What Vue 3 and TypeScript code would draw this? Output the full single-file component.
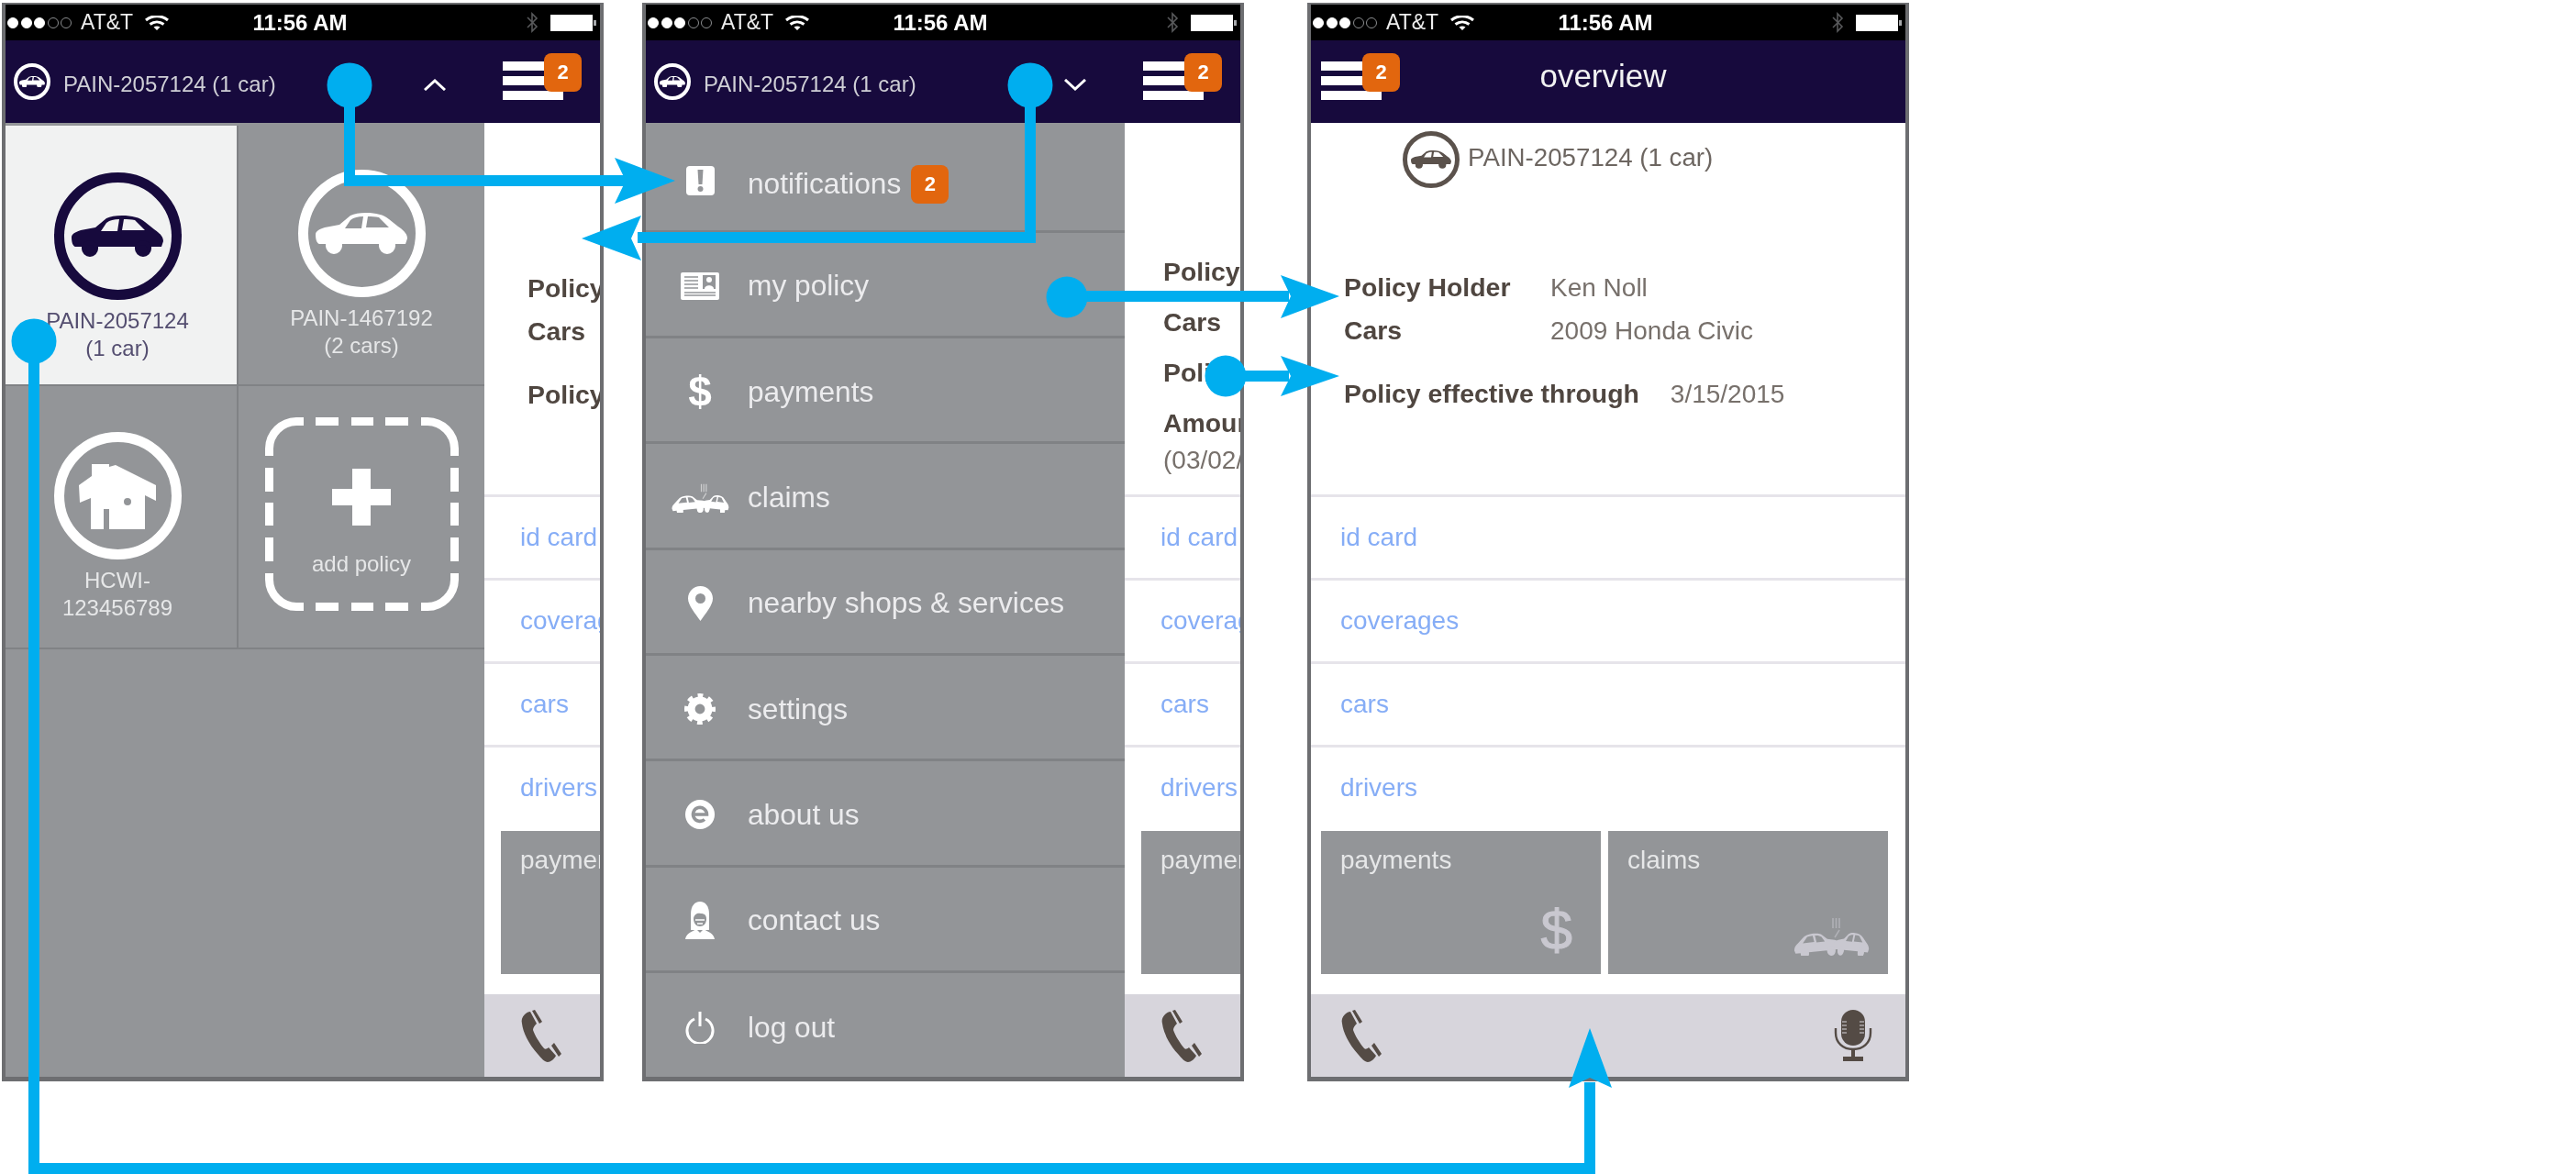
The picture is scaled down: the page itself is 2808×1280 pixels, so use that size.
<script setup lang="ts">
interface InfoRow {
  label: string
  value: string
  spaced?: boolean
}

interface Phone {
  id: string
  mode: 'accounts' | 'menu' | 'overview'
  rows: InfoRow[]
}

const policyRows: InfoRow[] = [
  { label: 'Policy Holder', value: 'Ken Noll' },
  { label: 'Cars', value: '2009 Honda Civic' },
  { label: 'Policy effective through', value: '3/15/2015', spaced: true },
]

const phones: Phone[] = [
  { id: 'p1', mode: 'accounts', rows: policyRows },
  {
    id: 'p2',
    mode: 'menu',
    rows: [
      { label: 'Policy Holder', value: 'Ken Noll' },
      { label: 'Cars', value: '2009 Honda Civic' },
      { label: 'Policy effective through', value: '3/15/2015' },
      { label: 'Amount due', value: '' },
    ],
  },
  { id: 'p3', mode: 'overview', rows: policyRows },
]

const menu = ['notifications', 'my policy', 'payments', 'claims', 'nearby shops & services', 'settings', 'about us', 'contact us', 'log out']
const links = ['id card', 'coverages', 'cars', 'drivers']

// connector overlay, in page coordinates
const lines = [
  '381,93 381,197 690,197',
  '1123,93 1123,259 695,259',
  '1163,323 1405,323',
  '1336,410 1405,410',
  '37,372 37,1274 1733,1274 1733,1180',
]
const heads = [
  '736,197 670,172 682,197 670,222',
  '634,260 699,235 688,260 699,284',
  '1460,323 1396,300 1407,323 1396,347',
  '1460,410 1396,388 1407,410 1396,432',
  '1733,1121 1710,1186 1733,1175 1757,1186',
]
const dots = [
  { x: 381, y: 93, r: 24.5 },
  { x: 1123, y: 93, r: 24.5 },
  { x: 1163, y: 324, r: 22.5 },
  { x: 1336, y: 410, r: 22.5 },
  { x: 37, y: 372, r: 24.5 },
]
</script>

<template>
  <div class="stage">
    <svg class="defs" width="0" height="0">
      <defs>
        <g id="car">
          <path fill-rule="evenodd" d="M0 24C0 20 4 18 10 16L26 13L38 3C42 1 48 0 55 0C66 0 74 2 80 7L90 15C96 19 100 23 100 28L98 34H87A9 9 0 0 1 69 34H29A9 9 0 0 1 11 34H4C1 33 0 28 0 24ZM32 17H50L52 4C46 4 42 5 38 8ZM55 16H80L69 5C65 4 61 4 57 4Z" />
          <path fill-rule="evenodd" d="M20 27A9 9 0 1 0 20 45A9 9 0 1 0 20 27ZM20 32A4.5 4.5 0 1 1 20 41A4.5 4.5 0 1 1 20 32ZM78 27A9 9 0 1 0 78 45A9 9 0 1 0 78 27ZM78 32A4.5 4.5 0 1 1 78 41A4.5 4.5 0 1 1 78 32Z" />
        </g>
        <g id="crash">
          <use href="#car" transform="translate(50 15) rotate(-6) scale(-.5 .58)" />
          <use href="#car" transform="translate(47 15) rotate(6) scale(.38 .58)" />
          <path d="M44 1V12M47.5 1V12M51 1V12M51 14L46 22" fill="none" stroke="currentColor" stroke-width="1.6" opacity=".55" />
        </g>
        <g id="handset">
          <path d="M4 5C1 8 0 11 1 15C2 24 8 37 18 48C22 53 26 57 29 57C32 57 36 54 38 50L30 41C28 43 26 43 25 42C20 36 15 28 13 22C13 19 15 17 17 15L10 2C8 2 6 3 4 5Z" />
          <path d="M12 1L15 0L23 13L20 15ZM33 39L36 36L44 48L41 51Z" />
        </g>
      </defs>
    </svg>

    <section v-for="phone in phones" :key="phone.id" class="phone" :class="phone.id">
      <div class="status">
        <div class="status-left">
          <span class="signal">
            <i v-for="n in 3" :key="n" class="on"></i>
            <i v-for="n in 2" :key="n"></i>
          </span>
          <span class="carrier">AT&amp;T</span>
          <svg class="wifi" viewBox="0 0 26 16" fill="none" stroke="#fff" stroke-width="3">
            <path d="M1 5C8 -.8 18 -.8 25 5M5.5 9.5C10 6 16 6 20.5 9.5" />
            <path d="M9.5 12.5L13 16L16.5 12.5C14.5 11 11.5 11 9.5 12.5Z" fill="#fff" stroke="none" />
          </svg>
        </div>
        <span class="time">11:56 AM</span>
        <div class="status-right">
          <svg class="bt" viewBox="0 0 14 23" fill="none" stroke="#58595b" stroke-width="1.6">
            <path d="M2 6L12 16L7 21V2L12 7L2 17" />
          </svg>
          <span class="battery"></span>
        </div>
      </div>

      <header class="nav" :class="{ 'nav--title': phone.mode === 'overview' }">
        <template v-if="phone.mode !== 'overview'">
          <span class="nav-circle">
            <svg viewBox="0 0 100 46" fill="#fff"><use href="#car" /></svg>
          </span>
          <span class="nav-policy">PAIN-2057124 (1 car)</span>
          <svg class="chevron" :class="{ 'chevron--down': phone.mode === 'menu' }" viewBox="0 0 24 13" fill="none" stroke="#fff" stroke-width="3">
            <path d="M1 12L12 2L23 12" />
          </svg>
        </template>
        <div class="burger">
          <i></i><i></i><i></i>
          <b class="badge badge--burger">2</b>
        </div>
        <h1 v-if="phone.mode === 'overview'" class="nav-title">overview</h1>
      </header>

      <div class="main">
        <aside v-if="phone.mode === 'accounts'" class="drawer accounts">
          <div class="cell cell--active">
            <span class="ring">
              <svg class="ring-car" viewBox="0 0 100 46" fill="currentColor"><use href="#car" /></svg>
            </span>
            <p>PAIN-2057124<br />(1 car)</p>
          </div>
          <div class="cell">
            <span class="ring">
              <svg class="ring-car" viewBox="0 0 100 46" fill="currentColor"><use href="#car" /></svg>
            </span>
            <p>PAIN-1467192<br />(2 cars)</p>
          </div>
          <div class="cell cell--home">
            <span class="ring">
              <svg class="ring-home" viewBox="0 0 84 72" fill="currentColor">
                <path fill-rule="evenodd" d="M14 1H33V4L40 2L84 24V41L72 35V72H33V50H27V72H13V38L1 43L0 24L14 14ZM53 38A4 4 0 1 0 53 46A4 4 0 1 0 53 38Z" />
              </svg>
            </span>
            <p>HCWI-<br />123456789</p>
          </div>
          <div class="cell cell--add">
            <div class="add-box">
              <svg class="add-frame" viewBox="0 0 211 211" fill="none" stroke="#fff" stroke-width="9">
                <path d="M4.5 42V34A30 30 0 0 1 34 4.5H42M55 4.5H80M94 4.5H118M131 4.5H156M170 4.5H177A30 30 0 0 1 206.5 34V42M206.5 55V81M206.5 93V118M206.5 131V157M206.5 170V177A30 30 0 0 1 177 206.5H170M156 206.5H131M118 206.5H94M80 206.5H55M42 206.5H34A30 30 0 0 1 4.5 177V170M4.5 157V131M4.5 118V93M4.5 81V55" />
              </svg>
              <svg class="plus" viewBox="0 0 64 62" fill="#fff"><path d="M22 0H42V22H64V40H42V62H22V40H0V22H22Z" /></svg>
              <span>add policy</span>
            </div>
          </div>
        </aside>

        <nav v-if="phone.mode === 'menu'" class="drawer menu">
          <div v-for="item in menu" :key="item" class="menu-row">
            <span class="menu-icon">
              <svg v-if="item === 'notifications'" class="i-note" viewBox="0 0 31 32">
                <rect width="31" height="32" rx="4" fill="#fff" />
                <path d="M12.5 4H18.5L17.5 20H13.5Z" fill="#939598" />
                <circle cx="15.5" cy="25" r="3" fill="#939598" />
              </svg>
              <svg v-else-if="item === 'my policy'" class="i-card" viewBox="0 0 42 30">
                <rect width="42" height="30" rx="2" fill="#fff" />
                <path d="M4 5H19M4 9H19M4 13H19M4 17H19M4 22H38M4 25H38" stroke="#939598" stroke-width="1.3" />
                <rect x="24" y="3" width="14" height="15" fill="#939598" />
                <circle cx="31" cy="8" r="3" fill="#fff" />
                <path d="M26 18C26 13 36 13 36 18Z" fill="#fff" />
              </svg>
              <span v-else-if="item === 'payments'" class="i-dollar">$</span>
              <svg v-else-if="item === 'claims'" class="i-crash" viewBox="0 0 84 42" fill="#fff" color="#fff"><use href="#crash" /></svg>
              <svg v-else-if="item === 'nearby shops & services'" class="i-pin" viewBox="0 0 27 38">
                <path fill="#fff" fill-rule="evenodd" d="M13.5 0C21 0 27 6 27 13.5C27 21 19 30 13.5 38C8 30 0 21 0 13.5C0 6 6 0 13.5 0ZM13.5 8A5.5 5.5 0 1 0 13.5 19A5.5 5.5 0 1 0 13.5 8Z" />
              </svg>
              <svg v-else-if="item === 'settings'" class="i-gear" viewBox="0 0 36 36" fill="none" stroke="#fff">
                <circle cx="18" cy="18" r="10" stroke-width="8.5" />
                <circle cx="18" cy="18" r="15" stroke-width="6" stroke-dasharray="5.89 5.89" stroke-dashoffset="2.95" />
              </svg>
              <svg v-else-if="item === 'about us'" class="i-about" viewBox="0 0 32 32">
                <circle cx="16" cy="16" r="16" fill="#fff" />
                <path d="M8.5 16H23.5A7.5 7.5 0 1 0 21 21.5" fill="none" stroke="#939598" stroke-width="3.6" />
              </svg>
              <svg v-else-if="item === 'contact us'" class="i-contact" viewBox="0 0 32 41">
                <path d="M6 31V14C6 5 10 0 16 0C22 0 26 5 26 14V31Z" fill="#fff" />
                <path d="M9 18C10 13 14 12 17 13C21 13 23 15 23 19C23 24 20 27 16 27C12 27 9 24 9 18Z" fill="#939598" />
                <path d="M11 20H21M13 24H19" stroke="#fff" stroke-width="1.5" />
                <path d="M0 41C1 34 8 33 12 30L16 34L20 30C24 33 31 34 32 41Z" fill="#fff" />
              </svg>
              <svg v-else class="i-power" viewBox="0 0 32 35" fill="none" stroke="#fff" stroke-width="3">
                <path d="M10 8A14 14 0 1 0 22 8M16 0V16" />
              </svg>
            </span>
            <span>{{ item }}</span>
            <b v-if="item === 'notifications'" class="badge badge--menu">2</b>
          </div>
        </nav>

        <div class="content" :class="{ 'content--pushed': phone.mode !== 'overview' }">
          <div class="summary">
            <div v-if="phone.mode === 'overview'" class="policy-id">
              <span class="policy-ring">
                <svg viewBox="0 0 100 46" fill="currentColor"><use href="#car" /></svg>
              </span>
              <span class="policy-name">PAIN-2057124 (1 car)</span>
            </div>
            <div v-for="row in phone.rows" :key="row.label" class="info" :class="{ 'info--spaced': row.spaced }">
              <strong>{{ row.label }}</strong>
              <span>{{ row.value }}</span>
            </div>
            <div v-if="phone.mode === 'menu'" class="info-note">(03/02/2015)</div>
          </div>
          <a v-for="link in links" :key="link" class="link">{{ link }}</a>
          <div class="tiles">
            <div class="tile">
              <span>payments</span>
              <span class="tile-dollar">$</span>
            </div>
            <div class="tile">
              <span>claims</span>
              <svg class="tile-crash" viewBox="0 0 84 42" fill="currentColor"><use href="#crash" /></svg>
            </div>
          </div>
          <div class="toolbar">
            <svg class="handset" viewBox="0 0 44 57" fill="currentColor"><use href="#handset" /></svg>
            <svg class="mic" viewBox="0 0 42 57" fill="currentColor">
              <rect x="8" width="26" height="39" rx="13" />
              <path d="M9 13H14M9 17H14M9 21H14M9 25H14M28 13H33M28 17H33M28 21H33M28 25H33" stroke="#d7d5dc" stroke-width="1.2" />
              <path d="M2 20V25C2 36 10 43 21 43C32 43 40 36 40 25V20" fill="none" stroke="currentColor" stroke-width="2.4" />
              <path d="M19 43H23V51H32V56H10V51H19Z" />
            </svg>
          </div>
        </div>
      </div>
    </section>

    <svg class="connectors" viewBox="0 0 2808 1280" fill="#00aeef">
      <polyline v-for="line in lines" :key="line" :points="line" fill="none" stroke="#00aeef" stroke-width="12" />
      <polygon v-for="head in heads" :key="head" :points="head" />
      <circle v-for="dot in dots" :key="dot.x" :cx="dot.x" :cy="dot.y" :r="dot.r" />
    </svg>
  </div>
</template>

<style>
body {
  background: #fff;
}
</style>

<style scoped>
.stage {
  position: relative;
  box-sizing: border-box;
  width: 2808px;
  height: 1280px;
  padding: 3px 0 0 2px;
  display: flex;
  overflow: hidden;
  background: #fff;
  font-family: "Liberation Sans", Arial, sans-serif;
  filter: blur(0.6px);
}
.defs {
  position: absolute;
}
.connectors {
  position: absolute;
  left: 0;
  top: 0;
  width: 2808px;
  height: 1280px;
  pointer-events: none;
}

.phone {
  box-sizing: border-box;
  flex: none;
  width: 656px;
  height: 1176px;
  display: flex;
  flex-direction: column;
  overflow: hidden;
  border: solid #6d6e71;
  border-width: 2px 4px 5px;
}
.p2 {
  margin-left: 42px;
}
.p3 {
  margin-left: 69px;
}

/* status bar */
.status {
  flex: none;
  height: 39px;
  display: grid;
  grid-template-columns: 1fr auto 1fr;
  align-items: center;
  background: #000;
  color: #fff;
  font-size: 23px;
}
.status-left {
  display: flex;
  align-items: center;
  padding-left: 2px;
}
.signal {
  display: flex;
  gap: 2.5px;
}
.signal i {
  box-sizing: border-box;
  width: 12px;
  height: 12px;
  border: 1px solid #8a8c8e;
  border-radius: 50%;
}
.signal i.on {
  background: #fff;
  border-color: #fff;
}
.carrier {
  margin-left: 10px;
  color: #ededed;
}
.wifi {
  width: 26px;
  height: 16px;
  margin-left: 13px;
}
.time {
  margin-right: 6px;
  font-size: 24px;
  font-weight: 700;
}
.status-right {
  display: flex;
  align-items: center;
  justify-content: flex-end;
  gap: 13px;
  padding-right: 8px;
}
.bt {
  width: 14px;
  height: 23px;
}
.battery {
  position: relative;
  width: 46px;
  height: 18px;
  background: #fff;
}
.battery::after {
  content: "";
  position: absolute;
  right: -4px;
  top: 6px;
  width: 3px;
  height: 6px;
  background: #a7a9ac;
}

/* nav */
.nav {
  flex: none;
  position: relative;
  height: 90px;
  display: flex;
  align-items: center;
  padding: 0 40px 0 9px;
  background: #170a3d;
  color: #e6e7e8;
}
.nav--title {
  padding: 0 0 0 11px;
}
.nav-circle {
  box-sizing: border-box;
  width: 40px;
  height: 40px;
  flex: none;
  display: flex;
  align-items: center;
  justify-content: center;
  border: 4px solid #fff;
  border-radius: 50%;
}
.nav-circle svg {
  width: 28px;
}
.nav-policy {
  margin: 6px 0 0 14px;
  font-size: 24px;
  color: #cfcfd6;
}
.chevron {
  width: 24px;
  height: 13px;
  margin: 6px 0 0 auto;
}
.chevron--down {
  transform: scaleY(-1);
}
.burger {
  position: relative;
  flex: none;
  width: 66px;
  margin-left: 62px;
  margin-bottom: 2px;
  display: flex;
  flex-direction: column;
  gap: 6px;
}
.nav--title .burger {
  margin-left: 0;
}
.burger i {
  height: 10px;
  background: #fff;
}
.badge {
  display: flex;
  align-items: center;
  justify-content: center;
  width: 41px;
  height: 42px;
  border-radius: 8px;
  background: #e2660e;
  color: #fff;
  font-size: 22px;
}
.badge--burger {
  position: absolute;
  left: 45px;
  top: -9px;
}
.badge--menu {
  margin: 0 0 0 11px;
}
.nav-title {
  flex: 1;
  margin: 0 0 12px;
  padding-right: 88px;
  text-align: center;
  font-size: 35px;
  font-weight: 400;
  color: #f1f2f2;
}

/* main area */
.main {
  flex: 1;
  min-height: 0;
  display: flex;
}
.drawer {
  flex: none;
  box-sizing: border-box;
  width: 522px;
  background: #939598;
}

.accounts {
  display: grid;
  grid-template-columns: 254px 1fr;
  grid-template-rows: 284px 287px;
  padding-top: 3px;
}
.cell {
  box-sizing: border-box;
  display: flex;
  flex-direction: column;
  align-items: center;
  padding-top: 48px;
  border-bottom: 2px solid #808285;
  color: #e6e7e8;
}
.cell:nth-child(odd) {
  border-right: 2px solid #808285;
  padding-right: 8px;
}
.cell--active {
  background: #f1f2f2;
  color: #170a3d;
  border-right-color: #f1f2f2;
  padding-top: 51px;
}
.cell--active p {
  color: #544e70;
}
.cell--home {
  padding-top: 50px;
}
.cell--home p {
  margin-top: 7px;
  line-height: 28px;
}
.cell p {
  margin: 8px 0 0;
  font-size: 24px;
  line-height: 30px;
  text-align: center;
}
.ring {
  box-sizing: border-box;
  width: 139px;
  height: 139px;
  flex: none;
  display: flex;
  align-items: center;
  justify-content: center;
  border: 11px solid currentColor;
  border-radius: 50%;
  color: inherit;
}
.cell:not(.cell--active) .ring {
  color: #fff;
}
.ring-car {
  width: 100px;
}
.ring-home {
  width: 84px;
  height: 72px;
}
.cell--add {
  padding-top: 34px;
}
.add-box {
  position: relative;
  box-sizing: border-box;
  width: 211px;
  height: 211px;
  display: flex;
  flex-direction: column;
  align-items: center;
  padding-top: 56px;
  font-size: 24px;
}
.add-frame {
  position: absolute;
  left: 0;
  top: 0;
  width: 211px;
  height: 211px;
}
.plus {
  width: 64px;
  height: 62px;
  margin-bottom: 28px;
}

.menu {
  display: flex;
  flex-direction: column;
  overflow: hidden;
  padding-top: 4.5px;
  color: #ececee;
  font-size: 31.7px;
}
.menu-row {
  box-sizing: border-box;
  flex: 0 0 115.3px;
  display: flex;
  align-items: center;
  padding: 4px 0 0 27px;
  border-bottom: 3px solid #808285;
}
.menu-row:first-child {
  padding-top: 12px;
}
.menu-row:last-child {
  border-bottom: 0;
}
.menu-icon {
  flex: none;
  width: 64px;
  margin-right: 20px;
  display: flex;
  justify-content: center;
  align-items: center;
}
.menu-row:first-child .menu-icon {
  margin-top: -8px;
}
.i-note {
  width: 31px;
  height: 32px;
}
.i-card {
  width: 42px;
  height: 30px;
}
.i-dollar {
  font-size: 46px;
  font-weight: 700;
  line-height: 46px;
  color: #fff;
}
.i-crash {
  width: 64px;
  height: 32px;
}
.i-pin {
  width: 27px;
  height: 38px;
}
.i-gear {
  width: 34px;
  height: 34px;
}
.i-about {
  width: 32px;
  height: 32px;
}
.i-contact {
  width: 32px;
  height: 41px;
}
.i-power {
  width: 32px;
  height: 35px;
}

/* overview content, shared by all three phones */
.content {
  flex: none;
  width: 648px;
  display: flex;
  flex-direction: column;
  background: #fff;
}
.summary {
  box-sizing: border-box;
  height: 405px;
  padding: 9px 0 0 36px;
  color: #5b534d;
  font-size: 28px;
}
.p1 .summary {
  padding: 157px 0 0 47px;
}
.p2 .summary {
  padding: 135px 0 0 42px;
}
.policy-id {
  display: flex;
  align-items: center;
  margin: 0 0 85px 64px;
  color: #6d6661;
}
.policy-name {
  margin-top: -4px;
  font-size: 27.7px;
}
.policy-ring {
  box-sizing: border-box;
  width: 62px;
  height: 62px;
  margin-right: 9px;
  display: flex;
  align-items: center;
  justify-content: center;
  border: 5px solid #5b524c;
  border-radius: 50%;
  color: #5b524c;
}
.policy-ring svg {
  width: 44px;
}
.info {
  display: flex;
  line-height: 47px;
}
.p2 .info {
  line-height: 55px;
}
.info--spaced {
  margin-top: 22px;
}
.info strong {
  box-sizing: border-box;
  min-width: 225px;
  padding-right: 34px;
  font-size: 28.4px;
  color: #4f4640;
}
.info span {
  color: #77706b;
}
.info-note {
  line-height: 30px;
  margin-top: -2px;
  color: #77706b;
}
.link {
  box-sizing: border-box;
  height: 91px;
  display: flex;
  align-items: center;
  padding-left: 32px;
  border-top: 3px solid #e6e4ea;
  color: #86adf6;
  font-size: 28px;
}
.tiles {
  display: flex;
  gap: 8px;
  margin: 3px 0 22px 11px;
}
.tile {
  box-sizing: border-box;
  width: 305px;
  height: 156px;
  display: flex;
  flex-direction: column;
  justify-content: space-between;
  padding: 16px 20px 20px 21px;
  background: #939598;
  color: #e6e7e8;
  font-size: 28px;
}
.tile-dollar {
  align-self: flex-end;
  margin-right: 11px;
  font-size: 62px;
  line-height: 57px;
  -webkit-text-stroke: 1px #c9c8d0;
  color: #c9c8d0;
}
.tile-crash {
  align-self: flex-end;
  width: 84px;
  height: 42px;
  color: #c9c8d0;
}
.toolbar {
  flex: 1;
  display: flex;
  align-items: center;
  justify-content: space-between;
  padding: 0 36px 0 33px;
  background: #d7d5dc;
  color: #544b45;
}
.handset {
  width: 44px;
  height: 57px;
}
.mic {
  width: 42px;
  height: 57px;
}
.content--pushed .link {
  padding-left: 39px;
}
.content--pushed .tiles {
  margin-left: 18px;
}
.content--pushed .toolbar {
  padding-left: 40px;
}
</style>
